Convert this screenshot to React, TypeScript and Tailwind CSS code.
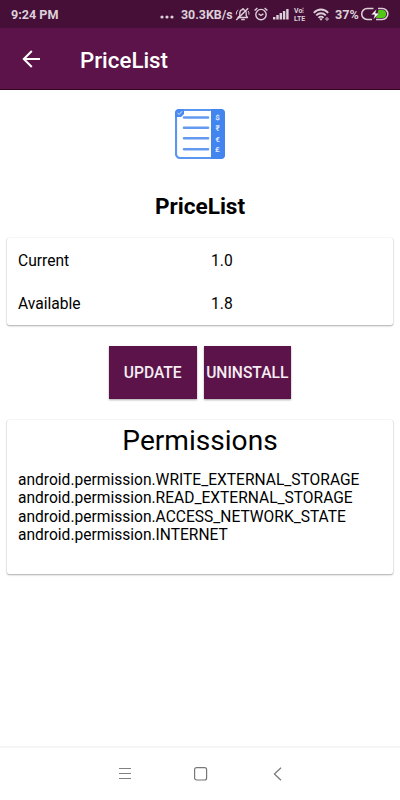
import type { ReactNode } from 'react';

const permissions = [
  'android.permission.WRITE_EXTERNAL_STORAGE',
  'android.permission.READ_EXTERNAL_STORAGE',
  'android.permission.ACCESS_NETWORK_STATE',
  'android.permission.INTERNET',
];

const versions = [
  { label: 'Current', value: '1.0' },
  { label: 'Available', value: '1.8' },
];

function MutedBellIcon() {
  return (
    <svg className="w-[15px] h-[14px] shrink-0" viewBox="0 0 15 14" fill="none" stroke="#ddd0d9" strokeWidth="1.3">
      <path d="M3 10.5h9.5l-1.3-1.8V6.2c0-2-1.3-3.6-3.2-3.6S4.8 4.2 4.8 6.2v2.5z" strokeLinejoin="round" />
      <path d="M6.3 12.6h3.4M8 1v1.4M1.2 13 13.2 1.2" strokeWidth="1.5" />
      <path d="M1.3 7.5c0-2 .6-3.5 1.9-4.7M14 7.5c0-1.6-.3-2.6-.9-3.5" strokeWidth="1" />
    </svg>
  );
}

function AlarmIcon() {
  return (
    <svg className="w-[14px] h-[14px] shrink-0" viewBox="0 0 14 14" fill="none" stroke="#ddd0d9" strokeWidth="1.4">
      <circle cx="7" cy="7.6" r="5.2" />
      <path d="m4.6 6.8 2.3 1.7L9.4 6.8" />
      <path d="M.6 3.6 3.4 1M13.4 3.6 10.6 1" />
    </svg>
  );
}

function SignalIcon() {
  return (
    <svg className="w-[16px] h-[12px] shrink-0" viewBox="0 0 16 12" fill="#ddd0d9">
      <rect x="0" y="9" width="2.4" height="2.5" />
      <rect x="3.3" y="7" width="2.4" height="4.5" />
      <rect x="6.6" y="5" width="2.4" height="6.5" />
      <rect x="9.9" y="3" width="2.4" height="8.5" />
      <rect x="13.2" y="1" width="2.4" height="10.5" />
    </svg>
  );
}

function WifiIcon() {
  return (
    <svg className="w-[17px] h-[13px] shrink-0" viewBox="0 0 17 13" fill="none" stroke="#ddd0d9" strokeWidth="1.8">
      <path d="M.8 4.8c4.2-4.4 10.2-4.4 14.4 0M3.2 7.4c2.8-2.9 6.8-2.9 9.6 0M5.5 9.8c1.5-1.6 3.5-1.6 5 0" />
      <path d="m6.3 10.8 1.7 1.9 1.7-1.9c-1-.9-2.4-.9-3.4 0z" fill="#ddd0d9" stroke="none" />
      <circle cx="14" cy="11" r="1.2" strokeWidth=".9" />
    </svg>
  );
}

function BatteryIcon() {
  return (
    <svg className="w-[28px] h-[14px] shrink-0" viewBox="0 0 28 14">
      <path d="M17.5 3h3.6a4 4 0 0 1 0 8H15z" fill="#50c814" />
      <path
        d="M12.5 1.5H6.2a5.5 5.5 0 0 0 0 11H11M17 1.5h4.3a5.5 5.5 0 0 1 0 11H15"
        fill="none"
        stroke="#ddd0d9"
        strokeWidth="1.5"
      />
      <path d="M15.6 2 10 7.8h3.6L12.4 12.4 18.4 6.2h-3.9z" fill="#fff" stroke="#450f37" strokeWidth=".4" />
    </svg>
  );
}

function StatusBar() {
  return (
    <div className="flex h-7 items-center bg-[#450f37] pl-[11px] pr-[10px] text-[12.6px] font-bold text-[#ddd0d9]">
      <span className="mt-[2px] w-[149px]">9:24 PM</span>
      <svg className="w-[14px] h-[4px] mt-[6px] shrink-0" viewBox="0 0 14 4" fill="#ddd0d9">
        <circle cx="2" cy="2" r="1.6" />
        <circle cx="7" cy="2" r="1.6" />
        <circle cx="12" cy="2" r="1.6" />
      </svg>
      <span className="mt-[2px] ml-[7px] w-[54px] whitespace-nowrap text-[12.4px]">30.3KB/s</span>
      <MutedBellIcon />
      <span className="w-[4px]" />
      <AlarmIcon />
      <span className="w-[5px]" />
      <SignalIcon />
      <span className="ml-[5px] mt-px w-[14px] text-[7px] leading-[8px]">
        <span className="block whitespace-nowrap">Vo⫶</span>
        <span className="block">LTE</span>
      </span>
      <span className="w-[5px]" />
      <WifiIcon />
      <span className="mt-[2px] ml-[5px] w-[26px]">37%</span>
      <BatteryIcon />
    </div>
  );
}

function AppBar() {
  return (
    <header className="flex h-[62px] items-center border-b border-[#35041f] bg-[#5c1349] pl-[22px] text-white">
      <svg className="w-[18px] h-[18px]" viewBox="0 0 18 18" fill="none" stroke="#fff" strokeWidth="2">
        <path d="M18 9H2M9.8 1 1.8 9l8 8" />
      </svg>
      <h1 className="ml-10 mt-[3px] text-[22.3px] font-medium leading-none">PriceList</h1>
    </header>
  );
}

function AppLogo() {
  return (
    <svg className="w-[50px] h-[50px]" viewBox="0 0 50 50">
      <rect x="1" y="1" width="48" height="48" rx="4" fill="#fff" stroke="#5b95f2" strokeWidth="2.2" />
      <path d="M36 0h10a4 4 0 0 1 4 4v42a4 4 0 0 1-4 4H36z" fill="#4285ee" />
      <path d="M0 4a4 4 0 0 1 4-4h5v5L6 8H0z" fill="#4a8af0" />
      <path d="m2.5 4 1.7 1.5L7 2.3" fill="none" stroke="#d5e4ff" />
      <path d="M9 8.5h24M9 18.7h24M9 29.3h24M9 40.2h24" stroke="#639aef" strokeWidth="2.6" strokeLinecap="round" />
      <g fill="#dce8ff" fontFamily="Roboto, sans-serif" fontSize="8" fontWeight="700" textAnchor="middle">
        <text x="42.5" y="11">$</text>
        <text x="42.5" y="21.5">₹</text>
        <text x="42.5" y="32.5">€</text>
        <text x="42.5" y="43">£</text>
      </g>
    </svg>
  );
}

function Card({ className, children }: { className: string; children: ReactNode }) {
  return (
    <section className={`mx-[7px] rounded-[2px] bg-white shadow-[0_1px_2px_rgba(0,0,0,0.32),0_0_1px_rgba(0,0,0,0.2)] ${className}`}>
      {children}
    </section>
  );
}

function ActionButton({ children }: { children: ReactNode }) {
  return (
    <button className="h-[53px] w-[87.5px] bg-[#5c1349] pt-[3px] text-[15.6px] font-medium text-[#f5edf3] shadow-[0_1px_2px_rgba(0,0,0,0.35)]">
      {children}
    </button>
  );
}

function NavigationBar() {
  return (
    <nav className="mt-auto flex h-[54px] items-center border-t-2 border-[#f5f5f5] pl-[118px]">
      <svg className="w-[14px] h-[14px]" viewBox="0 0 14 14" stroke="#808080">
        <path d="M1 1.5h12M1 6.5h12M1 11.5h12" />
      </svg>
      <svg className="ml-[62px] w-[14px] h-[14px]" viewBox="0 0 14 14" fill="none" stroke="#777" strokeWidth="1.2">
        <rect x=".6" y=".6" width="12" height="12.4" rx="2" />
      </svg>
      <svg className="ml-[65px] w-[9px] h-[14px]" viewBox="0 0 9 14" fill="none" stroke="#777" strokeWidth="1.2">
        <path d="M8 .7 1.4 7 8 13.3" />
      </svg>
    </nav>
  );
}

export default function App() {
  return (
    <div className="flex h-[800px] w-[400px] flex-col overflow-hidden bg-white font-['Roboto',sans-serif] text-black">
      <StatusBar />
      <AppBar />
      <main>
        <div className="flex flex-col items-center pt-[19px]">
          <AppLogo />
          <h2 className="mt-[34px] text-[22.6px] font-bold leading-[28px]">PriceList</h2>
        </div>

        <Card className="mt-[17px] h-[87px] px-[11px] pt-[2px]">
          {versions.map((row) => (
            <div key={row.label} className="flex h-[43px] items-center text-[15.6px]">
              <span className="w-[193px]">{row.label}</span>
              <span>{row.value}</span>
            </div>
          ))}
        </Card>

        <div className="mt-[21px] flex gap-[7px] pl-[109px]">
          <ActionButton>UPDATE</ActionButton>
          <ActionButton>UNINSTALL</ActionButton>
        </div>

        <Card className="mt-[21px] h-[154px] px-[11px] pt-[4px]">
          <h3 className="text-center text-[28.1px] leading-[34px]">Permissions</h3>
          <ul className="mt-[13px] text-[15.57px] leading-[18.4px]">
            {permissions.map((permission) => (
              <li key={permission}>{permission}</li>
            ))}
          </ul>
        </Card>
      </main>
      <NavigationBar />
    </div>
  );
}
